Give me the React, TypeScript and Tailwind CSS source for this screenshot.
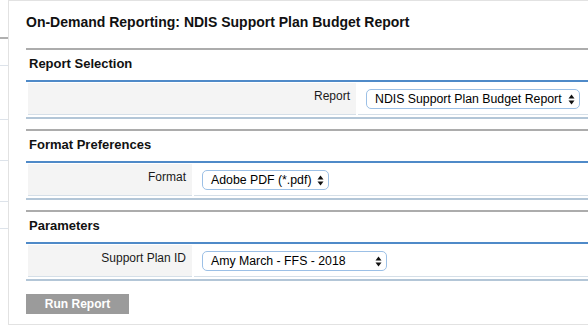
import React from "react";

function Arrows() {
  return (
    <svg width="7" height="11" viewBox="0 0 7 11" className="shrink-0">
      <path d="M3.5 0.5 L6.5 4.5 L0.5 4.5 Z" fill="#111" />
      <path d="M3.5 10.5 L6.5 6.5 L0.5 6.5 Z" fill="#111" />
    </svg>
  );
}

function FakeSelect({ text, width }: { text: string; width: string }) {
  return (
    <div
      className={`${width} h-[20px] flex items-center justify-between rounded-[5px] border border-[#9cc0e6] bg-white pl-[8px] pr-[4px] text-[12.3px] leading-[15px] text-black`}
    >
      <span className="whitespace-nowrap">{text}</span>
      <Arrows />
    </div>
  );
}

function Section({
  title,
  label,
  labelWidth,
  children,
}: {
  title: string;
  label: string;
  labelWidth: string;
  children: React.ReactNode;
}) {
  return (
    <div className="mb-[10px]">
      <div className="border-t-2 border-[#acacac] pt-[6px] pb-[9px] pl-[3px] text-[13px] leading-[15px] font-bold text-[#111]">
        {title}
      </div>
      <div className="border-t-2 border-[#4f8ac8] border-b-2 border-b-[#b3c6d7] pt-[1px] pb-[2px] pl-[2px]">
        <div className="flex gap-[2px]">
          <div
            className={`${labelWidth} shrink-0 h-[32px] bg-[#f4f4f4] border-b border-[#d5dfe8] pt-[6px] pr-[6px] text-right text-[12px] leading-[14px] text-[#1a1a1a]`}
          >
            {label}
          </div>
          <div className="flex-1 h-[32px] border-b border-[#d5dfe8] pt-[6px] pl-[8px]">
            {children}
          </div>
        </div>
      </div>
    </div>
  );
}

export default function App() {
  return (
    <div
      className="w-[588px] h-[326px] bg-white flex overflow-hidden"
      style={{ fontFamily: '"Liberation Sans", Arial, Helvetica, sans-serif' }}
    >
      <div className="w-[8px] shrink-0 flex flex-col">
        <div className="mt-[37px] h-[2px] bg-[#b0b0b0]" />
        <div className="mt-[26px] h-[1px] bg-[#dde3ea]" />
        <div className="mt-[53px] h-[1px] bg-[#dde3ea]" />
        <div className="mt-[40px] h-[1px] bg-[#dde3ea]" />
        <div className="mt-[40px] h-[1px] bg-[#dde3ea]" />
        <div className="mt-[26px] h-[1px] bg-[#dde3ea]" />
      </div>
      <div className="flex-1 h-[325px] border-l border-t border-b border-[#e2e2e2] pl-[17px] overflow-hidden">
        <div className="pt-[13px] pb-[18px] text-[14px] leading-[16px] font-bold text-[#111] whitespace-nowrap">
          On-Demand Reporting: NDIS Support Plan Budget Report
        </div>
        <Section title="Report Selection" label="Report" labelWidth="w-[328px]">
          <FakeSelect text="NDIS Support Plan Budget Report" width="w-[214px]" />
        </Section>
        <Section title="Format Preferences" label="Format" labelWidth="w-[164px]">
          <FakeSelect text="Adobe PDF (*.pdf)" width="w-[127px]" />
        </Section>
        <Section title="Parameters" label="Support Plan ID" labelWidth="w-[164px]">
          <FakeSelect text="Amy March - FFS - 2018" width="w-[185px]" />
        </Section>
        <button className="w-[103px] h-[20px] bg-[#9b9b9b] text-white text-[12px] leading-[14px] font-bold">
          Run Report
        </button>
      </div>
    </div>
  );
}
